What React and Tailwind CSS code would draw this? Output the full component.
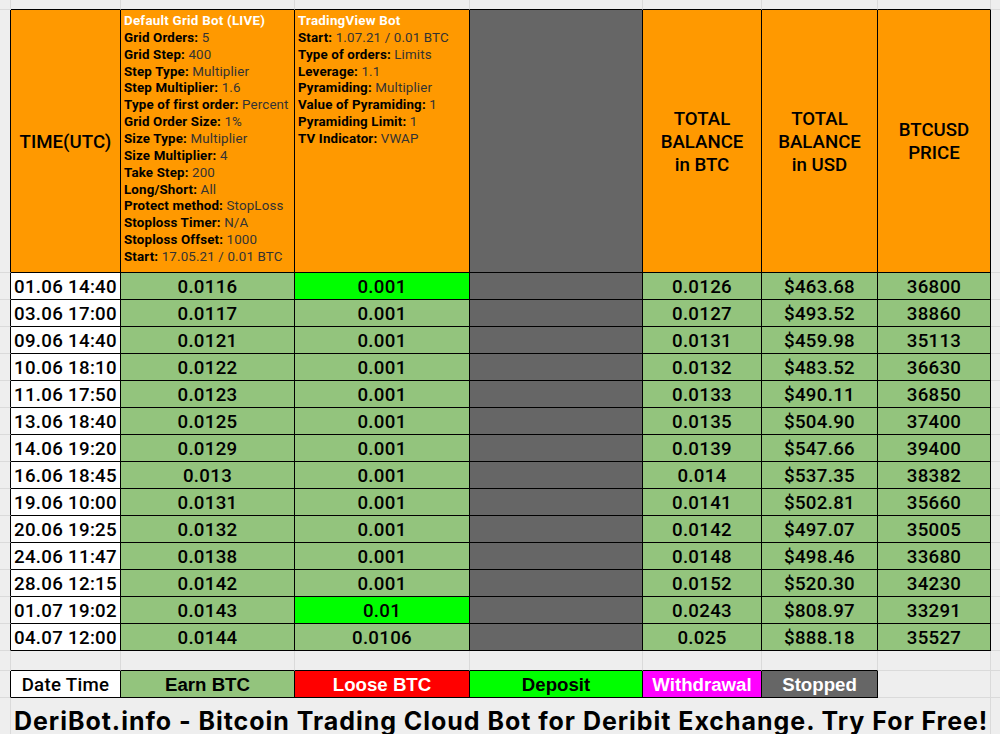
const rows = [
  ["01.06 14:40", "0.0116", "0.001", "0.0126", "$463.68", "36800", true],
  ["03.06 17:00", "0.0117", "0.001", "0.0127", "$493.52", "38860"],
  ["09.06 14:40", "0.0121", "0.001", "0.0131", "$459.98", "35113"],
  ["10.06 18:10", "0.0122", "0.001", "0.0132", "$483.52", "36630"],
  ["11.06 17:50", "0.0123", "0.001", "0.0133", "$490.11", "36850"],
  ["13.06 18:40", "0.0125", "0.001", "0.0135", "$504.90", "37400"],
  ["14.06 19:20", "0.0129", "0.001", "0.0139", "$547.66", "39400"],
  ["16.06 18:45", "0.013", "0.001", "0.014", "$537.35", "38382"],
  ["19.06 10:00", "0.0131", "0.001", "0.0141", "$502.81", "35660"],
  ["20.06 19:25", "0.0132", "0.001", "0.0142", "$497.07", "35005"],
  ["24.06 11:47", "0.0138", "0.001", "0.0148", "$498.46", "33680"],
  ["28.06 12:15", "0.0142", "0.001", "0.0152", "$520.30", "34230"],
  ["01.07 19:02", "0.0143", "0.01", "0.0243", "$808.97", "33291", true],
  ["04.07 12:00", "0.0144", "0.0106", "0.025", "$888.18", "35527"],
];

const grid = [
  ["Grid Orders:", "5"], ["Grid Step:", "400"], ["Step Type:", "Multiplier"], ["Step Multiplier:", "1.6"],
  ["Type of first order:", "Percent"], ["Grid Order Size:", "1%"], ["Size Type:", "Multiplier"],
  ["Size Multiplier:", "4"], ["Take Step:", "200"], ["Long/Short:", "All"], ["Protect method:", "StopLoss"],
  ["Stoploss Timer:", "N/A"], ["Stoploss Offset:", "1000"], ["Start:", "17.05.21 / 0.01 BTC"],
];
const tv = [
  ["Start:", "1.07.21 / 0.01 BTC"], ["Type of orders:", "Limits"], ["Leverage:", "1.1"], ["Pyramiding:", "Multiplier"],
  ["Value of Pyramiding:", "1"], ["Pyramiding Limit:", "1"], ["TV Indicator:", "VWAP"],
];

function Blank({ dark, last, bottomDark }) {
  return (
    <div
      className={`border-b ${bottomDark ? "border-b-black" : "border-b-[#dadada]"} ${last ? "" : "border-r"} ${dark ? "border-r-black" : "border-r-[#dadada]"}`}
    />
  );
}

function Cell({ bg, children }) {
  return (
    <div className={`flex items-center justify-center border-r border-b border-black pt-[3px] text-center font-medium text-[18.67px] leading-none tracking-[0.3px] ${bg}`}>
      {children}
    </div>
  );
}

function Legend({ bg, children }) {
  return (
    <div className={`flex items-center justify-center border-r border-b border-black pt-[3px] text-center font-['Liberation_Sans',sans-serif] font-bold text-[18.67px] leading-none ${bg}`}>
      {children}
    </div>
  );
}

function Spec({ title, items }) {
  return (
    <div className="flex flex-col overflow-hidden whitespace-nowrap border-r border-b border-black bg-[#ff9900] pl-[3px] pt-[3px] text-[13.33px] leading-[16.86px] tracking-[0.15px] text-[#333333]">
      <div className="font-bold tracking-[0.25px] text-white">{title}</div>
      {items.map(([k, v]) => (
        <div key={k}>
          <span className="font-bold text-black">{k}</span> {v}
        </div>
      ))}
    </div>
  );
}

function Head({ children }) {
  return (
    <div className="flex items-center justify-center border-r border-b border-black bg-[#ff9900] pt-[2px] text-center font-medium text-[18.67px] leading-[23px]">
      <div>{children}</div>
    </div>
  );
}

export default function App() {
  return (
    <div className="h-[734px] w-[1000px] overflow-hidden bg-[#eeeeee] font-['Roboto',sans-serif] text-black">
      <div className="grid grid-cols-[11px_110px_174px_175px_173px_119px_116px_113px_9px] grid-rows-[10px_263px_repeat(14,27px)_20px_27px_37px]">
        <Blank />
        <Blank bottomDark /><Blank bottomDark /><Blank bottomDark /><Blank bottomDark /><Blank bottomDark /><Blank bottomDark /><Blank bottomDark />
        <Blank last />

        <Blank dark />
        <Head>TIME(UTC)</Head>
        <Spec title="Default Grid Bot (LIVE)" items={grid} />
        <Spec title="TradingView Bot" items={tv} />
        <div className="border-r border-b border-black bg-[#666666]" />
        <Head>TOTAL<br />BALANCE<br />in BTC</Head>
        <Head>TOTAL<br />BALANCE<br />in USD</Head>
        <Head>BTCUSD<br />PRICE</Head>
        <Blank last />

        {rows.map((r) => (
          <div key={r[0]} className="contents">
            <Blank dark />
            <Cell bg="bg-white">{r[0]}</Cell>
            <Cell bg="bg-[#93c47d]">{r[1]}</Cell>
            <Cell bg={r[6] ? "bg-[#00ff00]" : "bg-[#93c47d]"}>{r[2]}</Cell>
            <div className="border-r border-b border-black bg-[#666666]" />
            <Cell bg="bg-[#93c47d]">{r[3]}</Cell>
            <Cell bg="bg-[#93c47d]">{r[4]}</Cell>
            <Cell bg="bg-[#93c47d]">{r[5]}</Cell>
            <Blank last />
          </div>
        ))}

        <Blank />
        <Blank bottomDark /><Blank bottomDark /><Blank bottomDark /><Blank bottomDark /><Blank bottomDark /><Blank bottomDark />
        <Blank />
        <Blank last />

        <Blank dark />
        <Cell bg="bg-white">Date Time</Cell>
        <Legend bg="bg-[#93c47d]">Earn BTC</Legend>
        <Legend bg="bg-[#ff0000] text-white">Loose BTC</Legend>
        <Legend bg="bg-[#00ff00]">Deposit</Legend>
        <Legend bg="bg-[#ff00ff] text-white">Withdrawal</Legend>
        <Legend bg="bg-[#666666] text-white">Stopped</Legend>
        <Blank />
        <Blank last />

        <div className="border-r border-b border-r-[#dadada] border-b-[#dadada]" />
        <div className="col-span-7 flex items-center overflow-hidden whitespace-nowrap border-r border-b border-r-[#dadada] border-b-[#dadada] pl-[3px] pt-[10px] font-['Inter',sans-serif] text-[25px] font-bold leading-none tracking-[0.96px]">
          DeriBot.info - Bitcoin Trading Cloud Bot for Deribit Exchange. Try For Free!
        </div>
        <div className="border-b border-b-[#dadada]" />
      </div>
    </div>
  );
}
